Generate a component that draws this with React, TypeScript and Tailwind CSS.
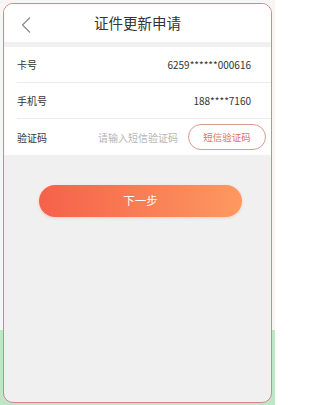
const FONT = "font-['Noto_Sans_CJK_SC','Noto_Sans',sans-serif]";

function InfoRow({ label, value }: { label: string; value: string }) {
  return (
    <div className="flex h-[36px] items-center justify-between border-b border-[#ececec] pr-[20px]">
      <span className="text-[10px] text-[#333]">{label}</span>
      <span className="text-[10px] text-[#333]">{value}</span>
    </div>
  );
}

export default function App() {
  return (
    <div
      className={`h-[405px] w-[275px] overflow-hidden bg-[linear-gradient(to_bottom,#f8f5f5_0,#f8f5f5_330px,#bfe6c6_330px)] pt-[3px] pl-[3px] ${FONT}`}
    >
      <div className="flex h-[400px] w-[269px] flex-col overflow-hidden rounded-[10px] border border-[#cf8a84] bg-[#f0f0f0]">
        <div className="relative flex h-[38px] shrink-0 items-center justify-center bg-white">
          <svg
            className="absolute left-[16px] top-[12px]"
            width="12"
            height="18"
            viewBox="0 0 12 18"
            fill="none"
          >
            <path d="M10 1.5L2.5 9l7.5 7.5" stroke="#8a8a8a" strokeWidth="1.2" />
          </svg>
          <span className="text-[14.5px] text-[#333]">证件更新申请</span>
        </div>

        <div className="mt-[5px] bg-white pl-[13px]">
          <InfoRow label="卡号" value="6259******000616" />
          <InfoRow label="手机号" value="188****7160" />
          <div className="flex h-[36px] items-center justify-between pr-[5px]">
            <span className="text-[10px] text-[#333]">验证码</span>
            <div className="flex items-center gap-[10px]">
              <span className="text-[10px] text-[#b5b5b5]">请输入短信验证码</span>
              <button className="flex h-[26px] w-[78px] items-center justify-center rounded-full border border-[#d99a92] text-[9.5px] text-[#e0705a]">
                短信验证码
              </button>
            </div>
          </div>
        </div>

        <div className="mt-[30px] flex">
          <button className="ml-[35px] flex h-[32px] w-[203px] items-center justify-center rounded-full bg-[linear-gradient(to_right,#f5614a,#fd9960)] text-[11.5px] text-white shadow-[0_1px_3px_rgba(240,120,90,0.3)]">
            下一步
          </button>
        </div>
      </div>
    </div>
  );
}
